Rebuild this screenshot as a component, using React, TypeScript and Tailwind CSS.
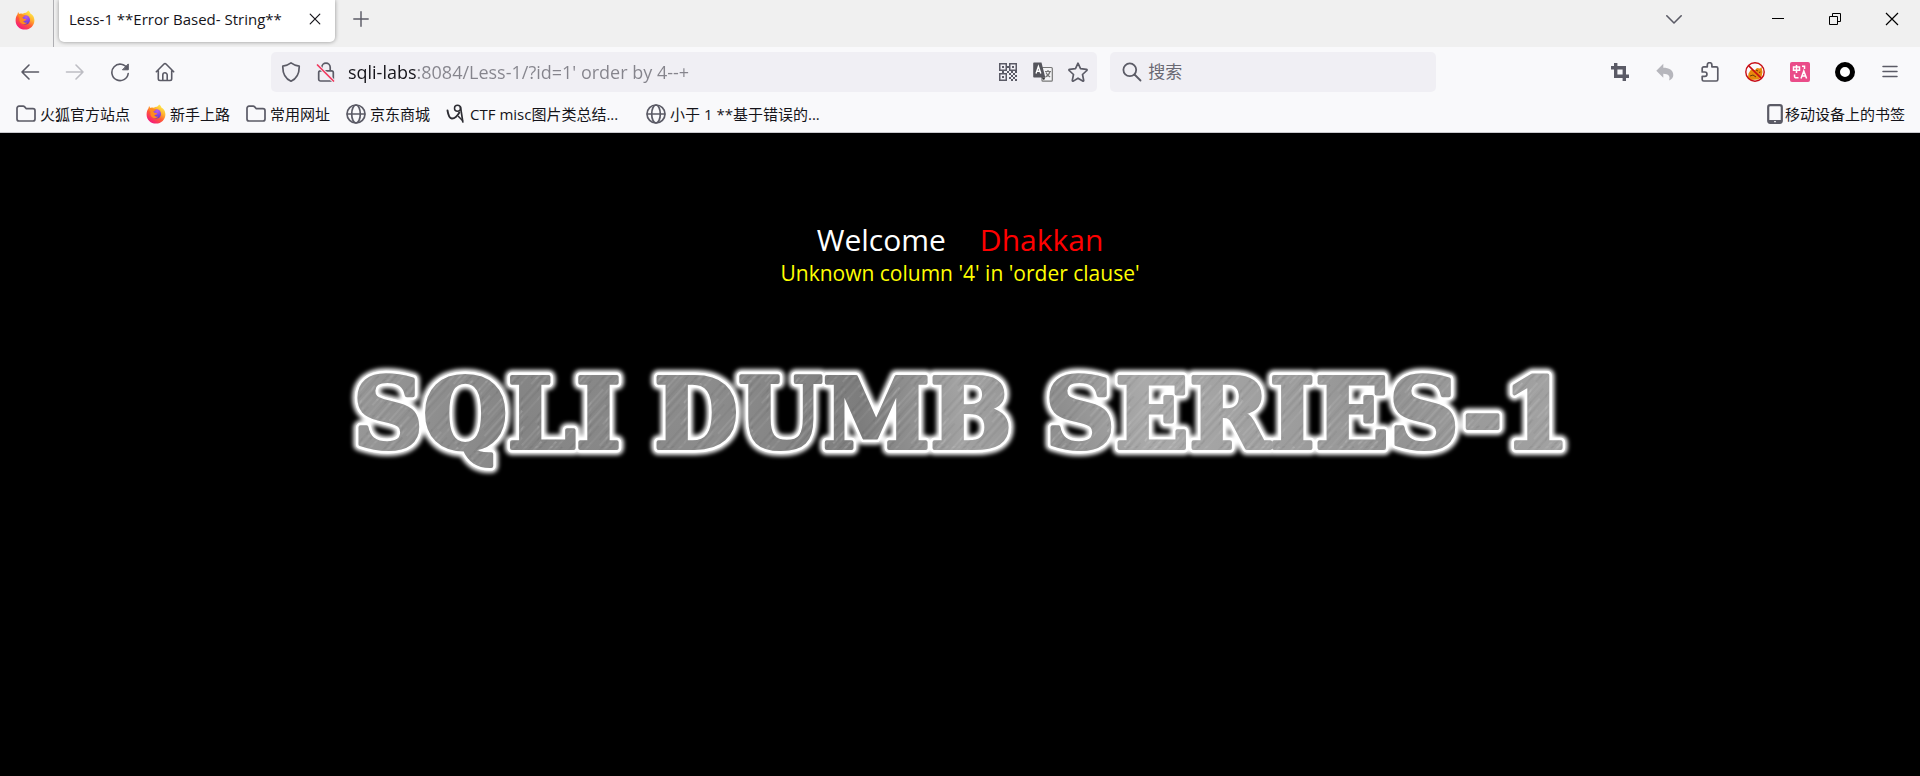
import React from "react";

const UI_FONT = "font-['Open_Sans','Noto_Sans_CJK_SC',sans-serif]";

type IconProps = { className?: string };

function FirefoxIcon({ className = "size-5" }: IconProps) {
  const id = React.useId();
  return (
    <svg viewBox="0 0 20 20" className={className} aria-hidden="true">
      <defs>
        <linearGradient id={`${id}b`} x1="0.85" y1="0.05" x2="0.25" y2="0.95">
          <stop offset="0" stopColor="#fff44f" />
          <stop offset="0.35" stopColor="#ffb02e" />
          <stop offset="0.62" stopColor="#ff5a36" />
          <stop offset="1" stopColor="#f5197b" />
        </linearGradient>
        <radialGradient id={`${id}p`} cx="0.6" cy="0.2" r="0.9">
          <stop offset="0" stopColor="#b45cf0" />
          <stop offset="0.6" stopColor="#7a3fe0" />
          <stop offset="1" stopColor="#4b3fb5" />
        </radialGradient>
      </defs>
      <path
        d="M13.2.4c1.3 1 2 2 2.4 3.300 1 .4 1.700 1 2.200 1.800 1 1.400 1.600 3.200 1.600 5 0 5.100-4.100 9.100-9.400 9.100S.6 15.600.6 10.400C.6 8.200 1.300 6 2.600 4.300c0-.9.200-1.700.6-2.400.3 1 .8 1.600 1.400 2 1-.4 2-.4 3.200-.1 1-.900 2-1.200 3.200-1.100.8-.6 1.600-1.300 2.200-2.300z"
        fill={`url(#${id}b)`}
      />
      <circle cx="10.300" cy="9.900" r="4.700" fill={`url(#${id}p)`} />
      <path
        d="M2.600 4.500c1.700-.9 3.300-.8 4.700.3 1 0 2 .2 2.600.6-.3 1-1.300 1.400-2.200 1.700-.3.800.2 1.300 1 1.700 1 .4 2 .1 2.600.700-.6 1.200-1.800 1.600-3 1.400.6 1.500 2.200 2.200 4 1.700-1.500 2-4.300 2.200-6.200.7C4 11.500 4.300 9.200 4.600 8z"
        fill="#ff8a1f"
      />
    </svg>
  );
}

type LineProps = { className?: string; children: React.ReactNode; width?: number };
function Line({ className = "size-5", children, width = 1.6 }: LineProps) {
  return (
    <svg
      viewBox="0 0 20 20"
      className={className}
      fill="none"
      stroke="currentColor"
      strokeWidth={width}
      strokeLinecap="round"
      strokeLinejoin="round"
      aria-hidden="true"
    >
      {children}
    </svg>
  );
}

const BackIcon = () => (
  <Line><path d="M18.500 10H2M9 3 2 10l7 7" /></Line>
);
const ForwardIcon = () => (
  <Line><path d="M1.500 10H18M11 3l7 7-7 7" /></Line>
);
const ReloadIcon = () => (
  <Line>
    <path d="M17.300 6.500A8.200 8.200 0 1 0 18.200 11.500" />
    <path d="M18.300 2.300v5.500h-5.500z" fill="currentColor" strokeWidth="1" />
  </Line>
);
const HomeIcon = () => (
  <Line>
    <path d="M1.300 9.800 9 2a1.400 1.400 0 0 1 2 0l7.700 7.800M3.300 8.500v8.300a1.700 1.700 0 0 0 1.700 1.700h10a1.700 1.700 0 0 0 1.700-1.700V8.500M7.800 18v-5a2.200 2.200 0 0 1 4.400 0v5" />
  </Line>
);
const ShieldIcon = () => (
  <Line width={1.7}>
    <path d="M10 .9c2.500 1.900 5 2.800 8.200 3.300.2 7.200-1.800 12.200-8.200 15C3.600 16.400 1.600 11.400 1.800 4.200 5 3.700 7.500 2.800 10 .9z" />
  </Line>
);
const LockIcon = () => (
  <Line width={1.7}>
    <path d="M5.800 8.500V5.300a4.200 4.200 0 0 1 8.400 0v3.200M4.500 8.800h11a1.800 1.800 0 0 1 1.800 1.800v6.600a1.800 1.800 0 0 1-1.800 1.800h-11a1.800 1.800 0 0 1-1.800-1.800v-6.600a1.800 1.800 0 0 1 1.800-1.800z" />
    <path d="M1.500 3 17.500 19" stroke="#f0eff4" strokeWidth="3.500" />
    <path d="M1.500 3 17.500 19" stroke="#f03a5f" strokeWidth="1.700" />
  </Line>
);
const StarIcon = () => (
  <Line width={1.7}>
    <path d="m10 1.200 2.500 5.400 5.900.7c.7.100.9.800.4 1.200l-4.300 4 1.200 5.900c.100.600-.5 1-1 .7L10 16.200l-4.700 2.900c-.5.300-1.100-.1-1-.7l1.200-5.900-4.300-4c-.5-.4-.3-1.100.4-1.200l5.900-.7z" />
  </Line>
);
const SearchIcon = () => (
  <Line width={1.8}>
    <circle cx="7.800" cy="7.800" r="6.400" />
    <path d="m12.500 12.500 6 6" />
  </Line>
);
const FolderIcon = () => (
  <Line width={1.7}>
    <path d="M1 4.200A2 2 0 0 1 3 2.200h4.200c.6 0 1.100.3 1.500.7l1.600 1.800H17a2 2 0 0 1 2 2V15a2 2 0 0 1-2 2H3a2 2 0 0 1-2-2z" />
  </Line>
);
const GlobeIcon = () => (
  <Line width={1.7}>
    <circle cx="10" cy="10" r="9" />
    <ellipse cx="10" cy="10" rx="4.300" ry="9" />
    <path d="M1.500 10h17" />
  </Line>
);
const PuzzleIcon = () => (
  <Line width={1.700}>
    <path d="M2.200 8V6.300a1.500 1.500 0 0 1 1.500-1.500h3.600V3a2.300 2.300 0 0 1 4.600 0v1.800h4.400a1.500 1.500 0 0 1 1.500 1.500v11.200a1.500 1.500 0 0 1-1.500 1.500H3.700a1.500 1.500 0 0 1-1.500-1.500v-3.200h2.600a2.100 2.100 0 0 0 0-4.300H2.200z" />
  </Line>
);
const QrIcon = () => (
  <svg viewBox="0 0 18 18" className="size-[18px]" fill="currentColor" aria-hidden="true">
    <path fillRule="evenodd" d="M0 0h8v8H0zM1.500 1.500v5h5v-5zM10 0h8v8h-8zM11.500 1.500v5h5v-5zM0 10h8v8H0zM1.500 11.500v5h5v-5z" />
    <path d="M3 3h2v2H3zM13 3h2v2h-2zM3 13h2v2H3zM8 3h2v2H8zM8 8h2v2H8zM10 10h2v2h-2zM14 10h2v2h-2zM12 12h2v2h-2zM16 12h2v2h-2zM10 14h2v2h-2zM14 14h2v2h-2zM12 16h2v2h-2zM16 16h2v2h-2zM3 8h2v2H3zM12 8h2v2h-2zM16 8h2v2h-2z" />
  </svg>
);
const TranslateIcon = () => (
  <svg viewBox="0 0 20 20" className="size-5" fill="none" aria-hidden="true">
    <rect x="9" y="5.500" width="10.300" height="13.700" rx="1" stroke="#777" strokeWidth="1.200" fill="#f4f4f6" />
    <path d="M12 9.500h6M15 8v1.500M17 9.500c-.7 3-2.500 4.500-4.500 5.500M13 10.500c.8 2 2.200 3.500 4.200 4.500" stroke="#777" strokeWidth="1.200" />
    <path d="M1 .5h7.500L12.300 15.500H1a.8.800 0 0 1-.8-.8V1.300A.8.800 0 0 1 1 .5z" fill="#55555c" />
    <path d="m8.500 15.500 3.800 0-1.300 2.700z" fill="#333" />
    <path d="m3 11.500 2.400-7L7.800 11.500M3.900 9.300h3" stroke="#fff" strokeWidth="1.400" />
  </svg>
);
const CropIcon = () => (
  <svg viewBox="0 0 18 18" className="size-[18px]" fill="none" stroke="currentColor" strokeWidth="3.400" aria-hidden="true">
    <path d="M4.700 0v13.300H18M0 4.700h13.300V18" />
  </svg>
);
const UndoIcon = () => (
  <svg viewBox="0 0 18 18" className="size-[18px]" fill="#b6b6bc" aria-hidden="true">
    <path d="M7.300.7v4C13 4.700 17.300 7 17.300 12c0 2.500-1.400 4.500-4.300 5.600 1.700-4.700-.5-6.800-5.700-6.900v4L.3 7.700z" />
  </svg>
);
const BlockedIcon = () => (
  <svg viewBox="0 0 20 20" className="size-5" fill="none" aria-hidden="true">
    <path d="M3.500 11.500 6 7.500l4 .5 2-2 3 .5 1.500-1.500 1 5-1 5-3 2.500-8 .5-2.500-2z" fill="#e8890c" />
    <path d="m5 14 3-1 3 2M11 8l2 1M14 10.500l1.500-.5" stroke="#6b3b08" strokeWidth="1" />
    <circle cx="10" cy="10" r="9.200" stroke="#c80d14" strokeWidth="1.400" />
    <path d="m3.600 3.600 12.800 12.800" stroke="#c80d14" strokeWidth="1.500" />
  </svg>
);
const PinkTranslateIcon = () => (
  <svg viewBox="0 0 20 20" className="size-5" fill="none" stroke="#fff" strokeWidth="1.500" aria-hidden="true">
    <rect width="20" height="20" rx="2" fill="#ea4c89" stroke="none" />
    <path d="M3.500 5h6v3.300h-6zM6.500 3v8M12 4.200h2.500V7M4.500 12.500v1.800a1.500 1.500 0 0 0 1.500 1.500h2.500M11 16.500l2.800-7.500 2.800 7.500M12 14h3.700" />
  </svg>
);
const RingIcon = () => (
  <svg viewBox="0 0 20 20" className="size-5" aria-hidden="true">
    <circle cx="10" cy="10" r="7.500" fill="#fff" stroke="#000" strokeWidth="5" />
  </svg>
);
const MenuIcon = () => (
  <Line width={1.5}><path d="M3 4.500h14M3 9.500h14M3 14.500h14" /></Line>
);
const ScribbleIcon = () => (
  <svg viewBox="0 0 20 20" className="size-5" fill="none" stroke="#2d2d33" strokeLinecap="round" aria-hidden="true">
    <path d="M1.500 6.500c.8 5 2 7.800 4.300 8 2.800.2 6-3 7.500-6" strokeWidth="1.900" />
    <circle cx="11.500" cy="4.200" r="3" strokeWidth="1.500" />
    <path d="M14.500 3c.6 4 1.600 9.500 2.300 15" strokeWidth="1.700" />
    <path d="m12.500 12.500 4 4" strokeWidth="1.500" />
  </svg>
);
const PhoneIcon = () => (
  <svg viewBox="0 0 16 20" className="h-5 w-4" fill="none" aria-hidden="true">
    <rect x="1.200" y="1.200" width="13.600" height="17.600" rx="2" stroke="#5b5b66" strokeWidth="2.200" />
    <path d="M1 16h14v3H1z" fill="#5b5b66" />
    <path d="M7 17.700h2" stroke="#fff" />
  </svg>
);

function ToolButton({ label, children, dim = false }: { label: string; children: React.ReactNode; dim?: boolean }) {
  return (
    <button
      aria-label={label}
      className={
        dim
          ? "flex h-10 w-[45px] shrink-0 items-center justify-center text-[#bdbdc3]"
          : "flex h-10 w-[45px] shrink-0 items-center justify-center text-[#5b5b66]"
      }
    >
      {children}
    </button>
  );
}

function TitleBar() {
  return (
    <div className="flex h-[47px] items-start bg-[#f0f0f0]">
      <button aria-label="Firefox" className="flex h-full w-[54px] shrink-0 items-center border-r border-[#aeaeb2] pb-2 pl-[15px]">
        <FirefoxIcon />
      </button>
      <div className="ml-[5px] flex h-[42px] w-[276px] shrink-0 items-center justify-between rounded-b-[5px] bg-white px-[10px] pb-1 shadow-[0_0_4px_rgba(0,0,0,0.4)]">
        <span className="whitespace-nowrap text-[15px] text-[#15141a]">Less-1 **Error Based- String**</span>
        <button aria-label="关闭标签页" className="flex size-5 items-center justify-center text-[#15141a]">
          <Line className="size-3" width={2}><path d="m2 2 16 16M18 2 2 18" /></Line>
        </button>
      </div>
      <button aria-label="打开新标签页" className="ml-[7px] flex size-[38px] items-center justify-center text-[#5b5b66]">
        <Line className="size-4" width={1.800}><path d="M10 1v18M1 10h18" /></Line>
      </button>
      <div className="flex-1" />
      <button aria-label="列出所有标签页" className="mr-[47px] flex h-[38px] w-[57px] items-center justify-center text-[#5b5b66]">
        <Line className="size-4" width={2}><path d="m1 6 9 9 9-9" /></Line>
      </button>
      <button aria-label="最小化" className="flex h-[38px] w-[57px] items-center justify-center">
        <svg viewBox="0 0 12 12" className="size-3"><path d="M0 5h12v1H0z" /></svg>
      </button>
      <button aria-label="还原" className="flex h-[38px] w-[57px] items-center justify-center">
        <svg viewBox="0 0 12 12" className="size-3" fill="none" stroke="#000">
          <path d="M.5 3.500h8v8h-8zM3.500 3.500v-3h8v8h-3" />
        </svg>
      </button>
      <button aria-label="关闭" className="flex h-[38px] w-[57px] items-center justify-center">
        <svg viewBox="0 0 14 14" className="size-[14px]" fill="none" stroke="#000" strokeWidth="1.200">
          <path d="m1 1 12 12M13 1 1 13" />
        </svg>
      </button>
    </div>
  );
}

function NavBar() {
  return (
    <div className="flex items-center pt-[5px] pr-2 pl-[7px]">
      <ToolButton label="后退"><BackIcon /></ToolButton>
      <ToolButton label="前进" dim><ForwardIcon /></ToolButton>
      <ToolButton label="刷新"><ReloadIcon /></ToolButton>
      <ToolButton label="主页"><HomeIcon /></ToolButton>
      <div className="flex-[84]" />
      <div className="flex h-10 min-w-0 flex-[808] items-center rounded-[5px] bg-[#f0eff4] pr-[9px] pl-[10px] text-[#5b5b66]">
        <button aria-label="跟踪保护"><ShieldIcon /></button>
        <button aria-label="连接不安全" className="ml-[15px]"><LockIcon /></button>
        <input
          aria-label="地址"
          defaultValue="sqli-labs:8084/Less-1/?id=1' order by 4--+"
          className="ml-3 min-w-0 flex-1 bg-[linear-gradient(to_right,#15141a_69px,#85848c_69px)] bg-clip-text text-[18px] text-transparent outline-none"
        />
        <button aria-label="二维码"><QrIcon /></button>
        <button aria-label="翻译此页面" className="ml-4"><TranslateIcon /></button>
        <button aria-label="添加书签" className="ml-[15px]"><StarIcon /></button>
      </div>
      <div className="ml-[13px] flex h-10 min-w-0 flex-[302] items-center gap-[6px] rounded-[5px] bg-[#f0eff4] px-3 text-[#5b5b66]">
        <SearchIcon />
        <input aria-label="搜索" placeholder="搜索" className="min-w-0 flex-1 bg-transparent text-[17px] outline-none placeholder:text-[#6a6973]" />
      </div>
      <div className="flex-[161]" />
      <ToolButton label="截图"><CropIcon /></ToolButton>
      <ToolButton label="撤销"><UndoIcon /></ToolButton>
      <ToolButton label="扩展"><PuzzleIcon /></ToolButton>
      <ToolButton label="代理"><BlockedIcon /></ToolButton>
      <ToolButton label="翻译"><PinkTranslateIcon /></ToolButton>
      <ToolButton label="容器"><RingIcon /></ToolButton>
      <ToolButton label="菜单"><MenuIcon /></ToolButton>
    </div>
  );
}

function Bookmark({ icon, children }: { icon: React.ReactNode; children: React.ReactNode }) {
  return (
    <a href="#" className="flex items-center gap-1 whitespace-nowrap">
      <span className="text-[#5b5b66]">{icon}</span>
      {children}
    </a>
  );
}

function BookmarksBar() {
  return (
    <div className="flex h-[41px] items-center justify-between border-b border-[#c9c9ce] pt-1 pr-[15px] pl-4 text-[15px] text-[#15141a]">
      <nav className="flex items-center gap-4">
        <Bookmark icon={<FolderIcon />}>火狐官方站点</Bookmark>
        <Bookmark icon={<FirefoxIcon />}>新手上路</Bookmark>
        <Bookmark icon={<FolderIcon />}>常用网址</Bookmark>
        <Bookmark icon={<GlobeIcon />}>京东商城</Bookmark>
        <Bookmark icon={<ScribbleIcon />}><span className="w-[160px]">CTF misc图片类总结...</span></Bookmark>
        <Bookmark icon={<GlobeIcon />}>小于 1 **基于错误的...</Bookmark>
      </nav>
      <a href="#" className="flex items-center gap-[2px]">
        <PhoneIcon />
        移动设备上的书签
      </a>
    </div>
  );
}

const WORDS = [
  { x: 13, text: "SQLI" },
  { x: 314, text: "DUMB" },
  { x: 705, text: "SERIES-1" },
];

function Words(props: React.SVGProps<SVGGElement>) {
  return (
    <g {...props}>
      {WORDS.map((w) => (
        <text key={w.text} x={w.x} y="107">{w.text}</text>
      ))}
    </g>
  );
}

function Banner() {
  return (
    <svg
      viewBox="0 0 1260 150"
      className="h-[150px] w-[1260px] max-w-full font-['DejaVu_Serif',serif] text-[97px] font-bold"
      role="img"
      aria-label="SQLI DUMB SERIES-1"
      strokeLinejoin="round"
    >
      <defs>
        <linearGradient id="steel" gradientUnits="userSpaceOnUse" x1="0" y1="120" x2="1240" y2="20">
          <stop offset="0" stopColor="#999" />
          <stop offset="0.15" stopColor="#858585" />
          <stop offset="0.3" stopColor="#8c8c8c" />
          <stop offset="0.42" stopColor="#7d7d7d" />
          <stop offset="0.5" stopColor="#a2a2a2" />
          <stop offset="0.58" stopColor="#8e8e8e" />
          <stop offset="0.65" stopColor="#aaa" />
          <stop offset="0.85" stopColor="#939393" />
          <stop offset="1" stopColor="#a5a5a5" />
        </linearGradient>
        <pattern id="brush" width="23" height="70" patternUnits="userSpaceOnUse" patternTransform="rotate(42)">
          <path d="M2 0v70M16 20v50" stroke="#fff" strokeOpacity="0.09" />
          <path d="M6 0v40M19 30v40M13 0v70" stroke="#000" strokeOpacity="0.07" />
          <path d="M10 10v34M21 0v26" stroke="#fff" strokeOpacity="0.16" />
        </pattern>
        <filter id="glow" x="-5%" y="-30%" width="110%" height="160%">
          <feGaussianBlur stdDeviation="2" />
        </filter>
      </defs>
      <Words fill="#fff" stroke="#fff" strokeWidth="14" filter="url(#glow)" />
      <Words fill="#fff" stroke="#fff" strokeWidth="9" />
      <Words fill="url(#steel)" stroke="url(#steel)" strokeWidth="4" />
      <Words fill="url(#brush)" stroke="url(#brush)" strokeWidth="4" />
    </svg>
  );
}

export default function App() {
  return (
    <div className={`flex min-h-screen flex-col bg-black ${UI_FONT}`}>
      <header className="bg-[#f9f9fb]">
        <TitleBar />
        <NavBar />
        <BookmarksBar />
      </header>
      <main className="flex flex-1 flex-col items-center pt-[86px]">
        <h1 className="flex gap-[34px] text-[30px] leading-[42px]">
          <span className="text-white">Welcome</span>
          <span className="text-[#ff0000]">Dhakkan</span>
        </h1>
        <p className="text-[21px] leading-6 text-[#ffff00]">Unknown column '4' in 'order clause'</p>
        <div className="mt-14 pl-5">
          <Banner />
        </div>
      </main>
    </div>
  );
}
